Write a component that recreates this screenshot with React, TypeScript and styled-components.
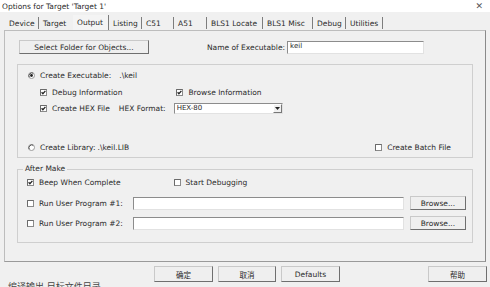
import React from 'react';
import styled, { createGlobalStyle } from 'styled-components';

const Global = createGlobalStyle`
  html, body { margin: 0; padding: 0; background: #f0f0f0; }
  body {
    font-family: "DejaVu Sans", "Noto Sans CJK SC", sans-serif;
    font-size: 7.5px;
    color: #2a2a2a;
  }
  * { box-sizing: border-box; }
`;

const Window = styled.div`
  width: 490px;
  height: 287px;
  overflow: hidden;
  background: #f0f0f0;
  display: flex;
  flex-direction: column;
  & > * { flex: none; }
`;

const TitleBar = styled.div`
  height: 12px;
  background: #ffffff;
  display: flex;
  align-items: center;
  justify-content: space-between;
  padding: 0 7px 0 2px;
  white-space: nowrap;
`;

const Close = styled.span`
  font-size: 9px;
  color: #555;
  line-height: 1;
`;

const TabStrip = styled.div`
  height: 18px;
  display: flex;
  align-items: flex-end;
  padding-left: 5px;
`;

const Tab = styled.div<{ $w: number; $active?: boolean; $noSep?: boolean }>`
  width: ${p => p.$w}px;
  height: ${p => (p.$active ? 15 : 12)}px;
  padding-left: 4px;
  display: flex;
  align-items: center;
  white-space: nowrap;
  border-right: 1px solid ${p => (p.$noSep ? 'transparent' : '#7d7d7d')};
  background: ${p => (p.$active ? '#f4f4f4' : 'transparent')};
  margin-bottom: ${p => (p.$active ? 0 : 1)}px;
`;

const Page = styled.div`
  margin-left: 4px;
  width: 482px;
  height: 232px;
  border: 1px solid #bdbdbd;
  border-right: 1px solid #8a8a8a;
  border-bottom: 1px solid #9a9a9a;
  display: flex;
  flex-direction: column;
  & > * { flex: none; }
`;

const TopRow = styled.div`
  margin-top: 9px;
  height: 14px;
  display: flex;
  align-items: center;
  padding-left: 14px;
`;

const Button = styled.div<{ $w: number; $h?: number; $ml?: number }>`
  width: ${p => p.$w}px;
  height: ${p => p.$h ?? 14}px;
  margin-left: ${p => p.$ml ?? 0}px;
  background: #efefef;
  border: 1px solid;
  border-color: #c9c9c9 #6f6f6f #6f6f6f #c9c9c9;
  display: flex;
  align-items: center;
  justify-content: center;
  white-space: nowrap;
  flex: none;
`;

const Label = styled.span<{ $ml?: number }>`
  margin-left: ${p => p.$ml ?? 0}px;
  white-space: nowrap;
`;

const Input = styled.div<{ $w: number; $ml?: number }>`
  width: ${p => p.$w}px;
  height: 13px;
  margin-left: ${p => p.$ml ?? 0}px;
  background: #fff;
  border: 1px solid;
  border-color: #8c8c8c #e2e2e2 #e2e2e2 #8c8c8c;
  padding: 0 2px;
  font-size: 7px;
  line-height: 9px;
  flex: none;
`;

const Group = styled.fieldset<{ $h: number; $mt: number }>`
  margin: ${p => p.$mt}px 0 0 12px;
  width: 456px;
  height: ${p => p.$h}px;
  border: 1px solid #cfcfcf;
  padding: 0;
  display: flex;
  flex-direction: column;
  & > * { flex: none; }
`;

const Legend = styled.legend`
  margin-left: 5px;
  padding: 0 2px;
  font-size: 7.5px;
  line-height: 8px;
`;

const Row = styled.div<{ $mt: number; $pl: number }>`
  margin-top: ${p => p.$mt}px;
  padding-left: ${p => p.$pl}px;
  height: 12px;
  display: flex;
  align-items: center;
  white-space: nowrap;
`;

const Opt = styled.div<{ $ml?: number; $mr?: number }>`
  display: flex;
  align-items: center;
  gap: 5px;
  margin-left: ${p => p.$ml ?? 0}px;
  margin-right: ${p => p.$mr ?? 0}px;
`;

const Spacer = styled.div`
  flex: 1;
`;

const Select = styled.div`
  margin-left: 8px;
  width: 109px;
  height: 11px;
  background: #fff;
  border: 1px solid;
  border-color: #8c8c8c #e2e2e2 #e2e2e2 #8c8c8c;
  display: flex;
  align-items: center;
  padding-left: 2px;
  font-size: 7px;
  flex: none;
`;

const Arrow = styled.div`
  margin-left: auto;
  width: 9px;
  height: 9px;
  background: #f0f0f0;
  border: 1px solid;
  border-color: #fff #777 #777 #fff;
  display: flex;
  align-items: center;
  justify-content: center;
`;

const BottomRow = styled.div`
  margin-top: 4px;
  height: 16px;
  display: flex;
  align-items: stretch;
  padding-left: 154px;
  padding-right: 3px;
  gap: 5px;
`;

const Cut = styled.div`
  margin-top: 1px;
  padding-left: 8px;
  font-size: 9px;
  line-height: 9px;
  color: #444;
  white-space: nowrap;
`;

const Check = ({ on }: { on?: boolean }) => (
  <svg width="7" height="7" viewBox="0 0 7 7" style={{ flex: 'none' }}>
    <rect x="0.5" y="0.5" width="6" height="6" fill="#fff" stroke="#8a8a8a" />
    <path d="M0.5 6.5V0.5H6.5" fill="none" stroke="#6a6a6a" />
    {on && <path d="M1.6 3.3 L2.9 4.7 L5.4 1.9" fill="none" stroke="#222" strokeWidth="1.3" />}
  </svg>
);

const Radio = ({ on }: { on?: boolean }) => (
  <svg width="7" height="7" viewBox="0 0 7 7" style={{ flex: 'none' }}>
    <circle cx="3.5" cy="3.5" r="3" fill="#fff" stroke="#9a9a9a" />
    <path d="M1.2 5.2 A3 3 0 0 1 5.2 1.2" fill="none" stroke="#555" />
    {on && <circle cx="3.5" cy="3.5" r="1.4" fill="#222" />}
  </svg>
);

const tabs: { t: string; w: number; active?: boolean; noSep?: boolean }[] = [
  { t: 'Device', w: 34 },
  { t: 'Target', w: 34, noSep: true },
  { t: 'Output', w: 36, active: true },
  { t: 'Listing', w: 33 },
  { t: 'C51', w: 32 },
  { t: 'A51', w: 33 },
  { t: 'BLS1 Locate', w: 56 },
  { t: 'BLS1 Misc', w: 50 },
  { t: 'Debug', w: 33 },
  { t: 'Utilities', w: 37 },
];

export default function App() {
  return (
    <Window>
      <Global />
      <TitleBar>
        <span>Options for Target 'Target 1'</span>
        <Close>✕</Close>
      </TitleBar>
      <TabStrip>
        {tabs.map(t => (
          <Tab key={t.t} $w={t.w} $active={t.active} $noSep={t.noSep}>
            {t.t}
          </Tab>
        ))}
      </TabStrip>
      <Page>
        <TopRow>
          <Button $w={130}>Select Folder for Objects...</Button>
          <Label $ml={58}>Name of Executable:</Label>
          <Input $w={137} $ml={2}>keil</Input>
        </TopRow>

        <Group as="div" $h={94} $mt={10}>
          <Row $mt={4} $pl={10}>
            <Opt>
              <Radio on />
              <span>Create Executable:</span>
            </Opt>
            <Label $ml={8}>.\keil</Label>
          </Row>
          <Row $mt={5} $pl={22}>
            <Opt>
              <Check on />
              <span>Debug Information</span>
            </Opt>
            <Opt $ml={54}>
              <Check on />
              <span>Browse Information</span>
            </Opt>
          </Row>
          <Row $mt={4} $pl={22}>
            <Opt>
              <Check on />
              <span>Create HEX File</span>
            </Opt>
            <Label $ml={9}>HEX Format:</Label>
            <Select>
              HEX-80
              <Arrow>
                <svg width="5" height="3" viewBox="0 0 5 3">
                  <path d="M0 0H5L2.5 3Z" fill="#222" />
                </svg>
              </Arrow>
            </Select>
          </Row>
          <Row $mt={27} $pl={10}>
            <Opt>
              <Radio />
              <span>Create Library:</span>
            </Opt>
            <Label $ml={2}>.\keil.LIB</Label>
            <Spacer />
            <Opt $mr={21}>
              <Check />
              <span>Create Batch File</span>
            </Opt>
          </Row>
        </Group>

        <Group $h={78} $mt={7}>
          <Legend>After Make</Legend>
          <Row $mt={3} $pl={9}>
            <Opt>
              <Check on />
              <span>Beep When Complete</span>
            </Opt>
            <Opt $ml={53}>
              <Check />
              <span>Start Debugging</span>
            </Opt>
          </Row>
          <Row $mt={9} $pl={9}>
            <Opt>
              <Check />
              <span>Run User Program #1:</span>
            </Opt>
            <Input $w={271} $ml={10}></Input>
            <Button $w={56} $h={14} $ml={6}>Browse...</Button>
          </Row>
          <Row $mt={8} $pl={9}>
            <Opt>
              <Check />
              <span>Run User Program #2:</span>
            </Opt>
            <Input $w={271} $ml={10}></Input>
            <Button $w={56} $h={14} $ml={6}>Browse...</Button>
          </Row>
        </Group>
      </Page>
      <BottomRow>
        <Button $w={59} $h={16}>确定</Button>
        <Button $w={58} $h={16}>取消</Button>
        <Button $w={59} $h={16}>Defaults</Button>
        <Spacer />
        <Button $w={59} $h={16}>帮助</Button>
      </BottomRow>
      <Cut>编译输出 目标文件目录</Cut>
    </Window>
  );
}
